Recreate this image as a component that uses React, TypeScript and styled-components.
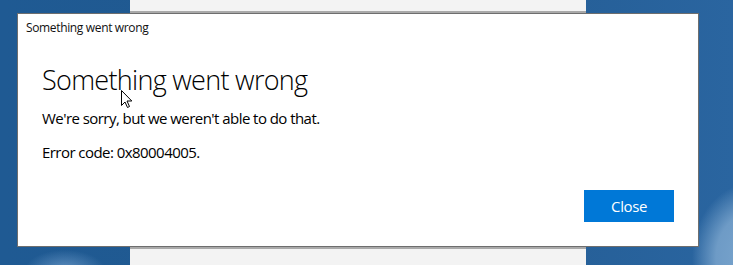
import React from "react";
import styled, { createGlobalStyle } from "styled-components";

const Global = createGlobalStyle`
  html, body { margin: 0; padding: 0; }
  body {
    width: 733px;
    height: 265px;
    overflow: hidden;
    font-family: "Open Sans", "Noto Sans", sans-serif;
  }
`;

const Desktop = styled.div`
  position: relative;
  width: 733px;
  height: 265px;
  overflow: hidden;
  background:
    radial-gradient(ellipse 60px 75px at 752px 258px, #7ba6ce 0%, #6e9bc6 60%, rgba(100,150,195,0) 100%),
    radial-gradient(ellipse 40px 20px at 65px 270px, #5f8fbf 0%, rgba(95,143,191,0) 100%),
    linear-gradient(90deg, #1f5a93 0%, #21598f 50%, #2a65a0 100%);
`;

const BackWindow = styled.div<{ $top: number; $height: number; $edge: "top" | "bottom" }>`
  position: absolute;
  left: 130px;
  width: 456px;
  top: ${(p) => p.$top}px;
  height: ${(p) => p.$height}px;
  background: #f3f3f3;
  ${(p) => (p.$edge === "top" ? "border-bottom: 2px solid #a9a9a9;" : "border-top: 2px solid #a9a9a9;")}
  box-sizing: border-box;
`;

const Dialog = styled.div`
  position: absolute;
  left: 17px;
  top: 13px;
  width: 682px;
  height: 234px;
  box-sizing: border-box;
  background: #ffffff;
  border: 1px solid #6e6e6e;
  display: flex;
  flex-direction: column;
  color: #000;
`;

const TitleBar = styled.div`
  padding: 6px 0 0 8px;
  height: 26px;
  box-sizing: border-box;
  font-size: 12px;
  line-height: 16px;
  letter-spacing: -0.35px;
  color: #111;
`;

const Body = styled.div`
  flex: 1;
  display: flex;
  flex-direction: column;
  padding: 22px 24px 24px 24px;
`;

const Heading = styled.h1`
  margin: 0;
  font-size: 27px;
  line-height: 36px;
  font-weight: 300;
  letter-spacing: -0.7px;
  color: #000;
`;

const Message = styled.p<{ $gap: number }>`
  margin: ${(p) => p.$gap}px 0 0 0;
  font-size: 15px;
  line-height: 20px;
  font-weight: 400;
  letter-spacing: -0.55px;
  color: #000;
`;

const Footer = styled.div`
  margin-top: auto;
  display: flex;
  justify-content: flex-end;
`;

const Button = styled.button`
  width: 90px;
  height: 32px;
  border: none;
  background: #0078d7;
  color: #fff;
  font-family: "Open Sans", "Noto Sans", sans-serif;
  font-size: 15px;
  letter-spacing: -0.4px;
  padding: 0;
  cursor: pointer;
`;

const Cursor = styled.svg`
  position: absolute;
  left: 121px;
  top: 90px;
`;

export default function App() {
  return (
    <>
      <Global />
      <Desktop>
        <BackWindow $top={0} $height={13} $edge="top" />
        <BackWindow $top={247} $height={18} $edge="bottom" />
        <Dialog>
          <TitleBar>Something went wrong</TitleBar>
          <Body>
            <Heading>Something went wrong</Heading>
            <Message $gap={10}>We're sorry, but we weren't able to do that.</Message>
            <Message $gap={14}>Error code: 0x80004005.</Message>
            <Footer>
              <Button>Close</Button>
            </Footer>
          </Body>
        </Dialog>
        <Cursor width="12" height="19" viewBox="0 0 12 19">
          <path
            d="M0.5 0.5 L0.5 15.5 L4 12 L6.5 17.5 L8.5 16.5 L6 11 L10.8 11 Z"
            fill="#fff"
            stroke="#000"
            strokeWidth="1"
            strokeLinejoin="miter"
          />
        </Cursor>
      </Desktop>
    </>
  );
}
